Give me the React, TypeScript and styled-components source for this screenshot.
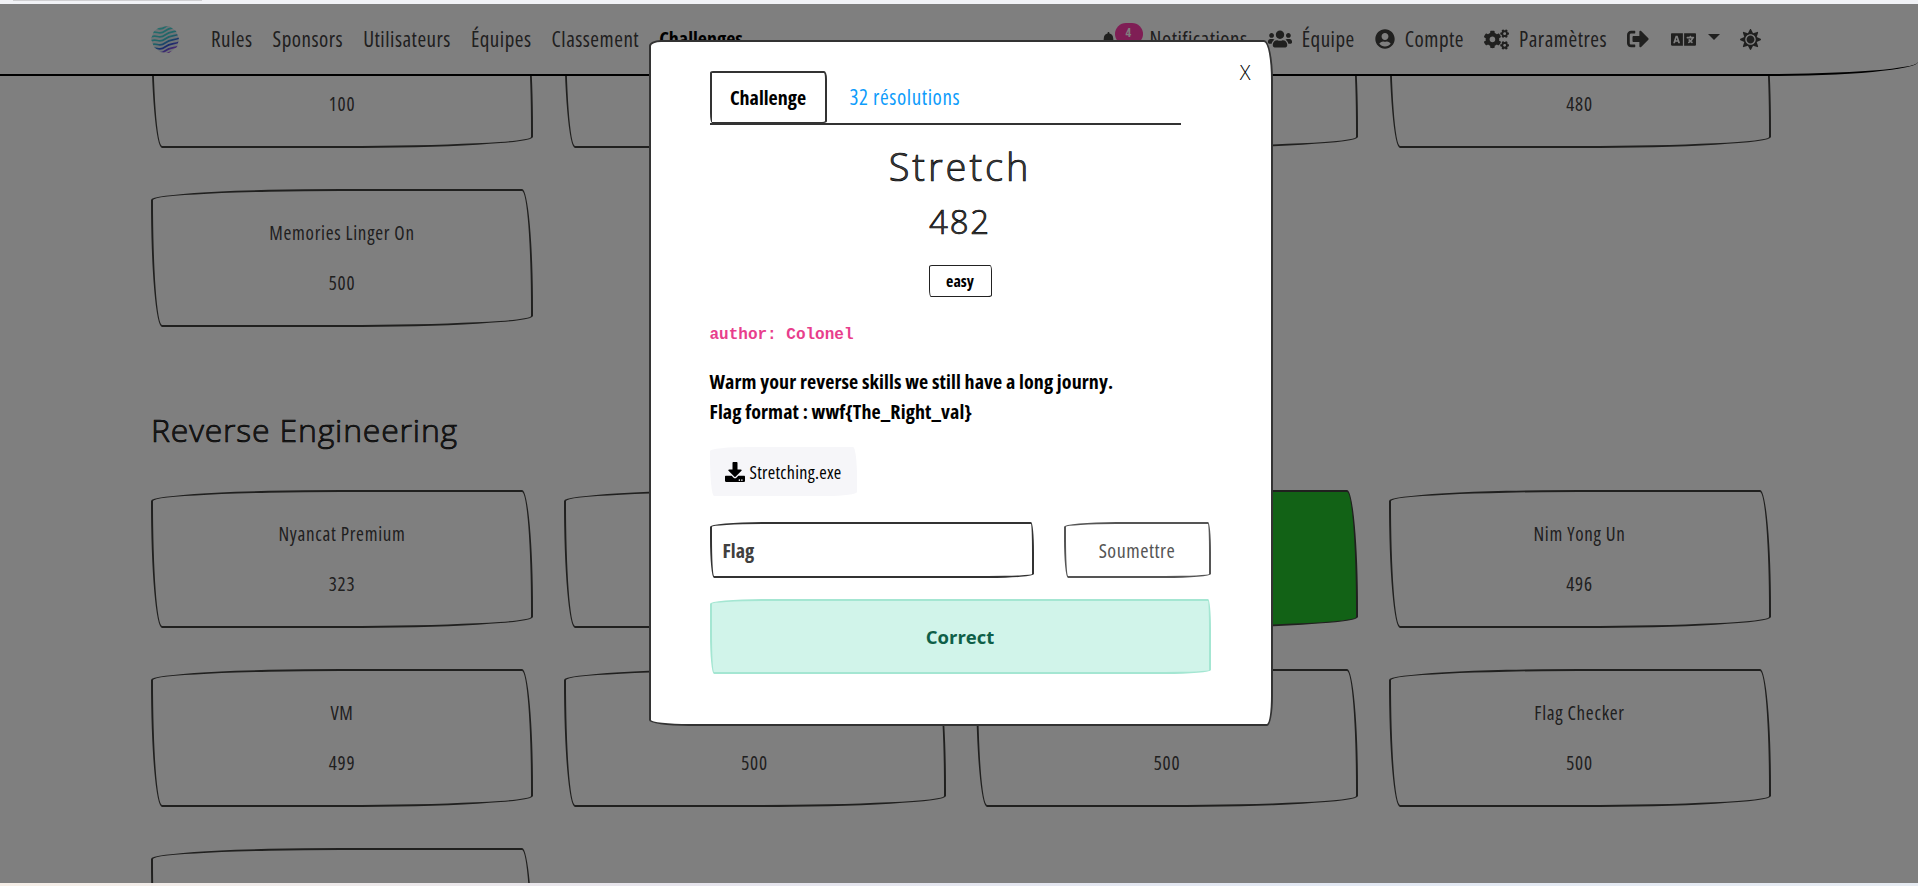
import * as React from 'react';
import styled, { createGlobalStyle, css } from 'styled-components';
import { FaBell, FaCogs, FaDownload, FaLanguage, FaSignOutAlt, FaSun, FaUserCircle, FaUsers } from 'react-icons/fa';

const hand = `"Open Sans", "Liberation Sans", sans-serif`;

const GlobalStyles = createGlobalStyle`
  html, body {
    margin: 0;
    height: 100%;
    overflow: hidden;
    background: #fff;
    color: #41403e;
    font-family: ${hand};
    font-stretch: 75%;
  }
  * { box-sizing: border-box; }
`;

const sketchLarge = css`
  border-radius: 190px 11px 190px 11px / 11px 120px 11px 126px;
`;

const sketchSmall = css`
  border-radius: 52px 3px 46px 4px / 5px 30px 4px 40px;
`;

const outlined = css`
  color: #444;
  font-stretch: 100%;
  font-weight: 300;
  -webkit-text-stroke: 0.7px #000;
`;

const Shell = styled.div`
  display: flex;
  flex-direction: column;
  height: 886px;
  overflow: hidden;
`;

const TopStrip = styled.div`
  flex: 0 0 4px;
  background: #f1f2f6;
  padding-left: 13px;
`;

const TopTab = styled.div`
  width: 189px;
  height: 1px;
  background: #cfcfd2;
`;

const BottomStrip = styled.div`
  flex: 0 0 3px;
  background: linear-gradient(90deg, #f6efe8 0%, #e6e4ec 35%, #e2e8f3 70%, #e6ebf2 100%);
`;

const Viewport = styled.div`
  position: relative;
  flex: 1;
  overflow: hidden;
  background: #fff;
`;

const Nav = styled.nav`
  position: absolute;
  top: 0;
  left: 0;
  right: 0;
  z-index: 1;
  display: flex;
  align-items: center;
  justify-content: space-between;
  height: 72px;
  padding: 0 157px 0 151px;
  background: #fff;
  border-bottom: 2px solid #000;
  border-bottom-right-radius: 155px 14px;
`;

const NavGroup = styled.div`
  display: flex;
  align-items: center;
`;

const LogoMark = styled.svg`
  width: 28px;
  height: 27px;
  margin-right: 32px;
`;

const NavLink = styled.a<{ $active?: boolean }>`
  margin-right: 20px;
  font-size: ${p => (p.$active ? 20 : 21)}px;
  letter-spacing: ${p => (p.$active ? 0 : 0.5)}px;
  line-height: 28px;
  white-space: nowrap;
  color: ${p => (p.$active ? '#000' : '#41403e')};
  font-weight: ${p => (p.$active ? 700 : 400)};
`;

const IconLink = styled.a<{ $wide?: boolean }>`
  display: flex;
  align-items: center;
  margin-left: ${p => (p.$wide ? 22 : 20)}px;
  font-size: 21px;
  letter-spacing: 0.5px;
  line-height: 28px;
  color: #41403e;
  white-space: nowrap;
  svg { flex: none; }
`;

const IconGap = styled.span`
  margin-left: 10px;
`;

const BellWrap = styled.span`
  display: flex;
  align-items: center;
`;

const Badge = styled.span`
  display: inline-block;
  width: 28px;
  height: 22px;
  margin: -10px 7px 0 -1px;
  border-radius: 11px;
  background: #ff3caa;
  color: #fff;
  font-size: 12px;
  font-weight: 700;
  line-height: 20px;
  text-align: center;
`;

const Caret = styled.span`
  width: 0;
  height: 0;
  margin-left: 12px;
  margin-bottom: 4px;
  border-left: 6px solid transparent;
  border-right: 6px solid transparent;
  border-top: 6px solid #41403e;
`;

const Content = styled.main`
  padding: 6px 0 0 151px;
`;

const CardGrid = styled.div`
  display: grid;
  grid-template-columns: repeat(4, 382px);
  column-gap: 30.5px;
  row-gap: 41px;
`;

const SectionTitle = styled.h2`
  margin: 0;
  padding: 83px 0 41px;
  font-size: 32px;
  line-height: 39px;
  letter-spacing: 0.8px;
  ${outlined}
`;

const Card = styled.div<{ $solved?: boolean }>`
  display: flex;
  flex-direction: column;
  align-items: center;
  justify-content: center;
  gap: 26px;
  height: 138px;
  padding-bottom: 1px;
  border: 2px solid #41403e;
  ${sketchLarge}
  background: ${p => (p.$solved ? '#25c52c' : 'transparent')};
  color: #41403e;
  font-size: 19px;
  letter-spacing: 0.7px;
  line-height: 24px;
`;

const Backdrop = styled.div`
  position: absolute;
  inset: 0;
  z-index: 2;
  display: flex;
  align-items: flex-start;
  justify-content: center;
  padding: 36px 0 0 3px;
  background: rgba(0, 0, 0, 0.5);
`;

const Modal = styled.div`
  position: relative;
  width: 624px;
  height: 686px;
  padding: 29px 60px 0 59px;
  background: #fff;
  color: #000;
  border: 2px solid #333;
  border-radius: 12px 9px 6px 40px / 6px 40px 30px 6px;
`;

const CloseButton = styled.span`
  position: absolute;
  top: 19px;
  right: 20px;
  font-size: 20px;
  font-stretch: 100%;
  font-weight: 300;
  line-height: 24px;
  color: #000;
`;

const Tabs = styled.div`
  display: flex;
  align-items: stretch;
  height: 54px;
  margin-right: 30px;
  border-bottom: 2px solid #333;
`;

const ActiveTab = styled.div`
  display: flex;
  align-items: center;
  justify-content: center;
  width: 117px;
  height: 52px;
  border: 2px solid #333;
  border-bottom-width: 1px;
  border-radius: 3px 3px 5px 2px / 2px 8px 2px 10px;
  font-size: 20px;
  font-weight: 700;
  color: #000;
`;

const TabLink = styled.div`
  display: flex;
  align-items: center;
  padding-left: 23px;
  font-size: 21px;
  letter-spacing: 0.6px;
  color: #0d9cfb;
`;

const ChallengeName = styled.h3`
  margin: 19px 0 0;
  font-size: 38px;
  line-height: 44px;
  letter-spacing: 2.9px;
  text-align: center;
  ${outlined}
`;

const ChallengeValue = styled.h4`
  margin: 16px 0 0;
  font-size: 33px;
  line-height: 36px;
  letter-spacing: 1.8px;
  text-align: center;
  ${outlined}
`;

const TagRow = styled.div`
  display: flex;
  justify-content: center;
  margin-top: 25px;
`;

const Tag = styled.span`
  display: flex;
  align-items: center;
  justify-content: center;
  width: 63px;
  height: 32px;
  border: 1.5px solid #222;
  border-radius: 3px 2px 4px 2px / 2px 6px 2px 8px;
  font-size: 16px;
  font-weight: 700;
  color: #000;
`;

const Author = styled.code`
  display: block;
  margin-top: 27px;
  font-family: "Liberation Mono", monospace;
  font-size: 16px;
  font-weight: 700;
  line-height: 22px;
  color: #e83e8c;
`;

const Description = styled.p`
  margin: 21px 0 0;
  font-size: 20px;
  font-weight: 700;
  line-height: 30px;
  letter-spacing: 0.1px;
  color: #000;
`;

const FileButton = styled.a`
  display: inline-flex;
  align-items: center;
  gap: 5px;
  width: 147px;
  height: 49px;
  margin-top: 20px;
  padding-left: 15px;
  background: #f6f6f9;
  border-radius: 40px 4px 30px 4px / 4px 30px 4px 40px;
  font-size: 18px;
  letter-spacing: 0.3px;
  color: #000;
`;

const SubmitRow = styled.div`
  display: flex;
  justify-content: space-between;
  margin-top: 26px;
`;

const FlagInput = styled.div`
  display: flex;
  align-items: center;
  width: 324px;
  height: 56px;
  padding-left: 11px;
  border: 2px solid #333;
  ${sketchSmall}
  font-size: 20px;
  font-weight: 700;
  color: #41403e;
`;

const SubmitButton = styled.button`
  width: 147px;
  height: 56px;
  padding: 0;
  background: #fff;
  border: 2px solid #555;
  ${sketchSmall}
  font-family: ${hand};
  font-stretch: 75%;
  font-size: 20px;
  letter-spacing: 0.5px;
  color: #555;
`;

const Result = styled.div`
  display: flex;
  align-items: center;
  justify-content: center;
  width: 501px;
  height: 75px;
  margin-top: 21px;
  background: #d1f4ea;
  border: 2px solid #a4e6d2;
  ${sketchSmall}
  font-stretch: 100%;
  font-size: 18.5px;
  font-weight: 700;
  color: #0e5f48;
`;

const Logo: React.FC = () => (
  <LogoMark viewBox="0 0 28 27">
    <defs>
      <linearGradient id="logo-fade" gradientUnits="userSpaceOnUse" x1="6" y1="0" x2="20" y2="27">
        <stop offset="0" stopColor="#4fe0d8" />
        <stop offset="0.5" stopColor="#3fc8d0" />
        <stop offset="0.72" stopColor="#2f58d8" />
        <stop offset="1" stopColor="#c050e8" />
      </linearGradient>
      <clipPath id="logo-shape">
        <path d="M9 1 L18 0 L25 5 L28 13 L26 21 L18 27 L9 26 L3 21 L0 13 L3 5 Z" />
      </clipPath>
    </defs>
    <g clipPath="url(#logo-shape)" fill="none" stroke="url(#logo-fade)" strokeWidth="1.7">
      <rect width="28" height="27" fill="#dfe8ee" stroke="none" />
      {[-6, -2, 2, 6, 10, 14, 18, 22, 26].map(y => (
        <path key={y} d={`M-2 ${y + 6} C 5 ${y + 1}, 8 ${y + 8}, 14 ${y + 3} S 24 ${y + 1}, 30 ${y - 3}`} />
      ))}
    </g>
  </LogoMark>
);

type Challenge = { name?: string; value?: number; solved?: boolean };

// entries under the modal or below the fold stay blank, the picture never shows them
const misc: Challenge[] = [
  { value: 100 },
  {},
  {},
  { value: 480 },
  { name: 'Memories Linger On', value: 500 },
];

const reverse: Challenge[] = [
  { name: 'Nyancat Premium', value: 323 },
  {},
  { solved: true },
  { name: 'Nim Yong Un', value: 496 },
  { name: 'VM', value: 499 },
  { value: 500 },
  { value: 500 },
  { name: 'Flag Checker', value: 500 },
  {},
];

const ChallengeCard: React.FC<Challenge> = ({ name, value, solved }) => (
  <Card $solved={solved}>
    {value !== undefined && <span>{name || '\u00a0'}</span>}
    {value !== undefined && <span>{value}</span>}
  </Card>
);

const App: React.FC = () => (
  <>
    <GlobalStyles />
    <Shell>
      <TopStrip>
        <TopTab />
      </TopStrip>
      <Viewport>
        <Nav>
          <NavGroup>
            <Logo />
            <NavLink>Rules</NavLink>
            <NavLink>Sponsors</NavLink>
            <NavLink>Utilisateurs</NavLink>
            <NavLink>Équipes</NavLink>
            <NavLink>Classement</NavLink>
            <NavLink $active>Challenges</NavLink>
          </NavGroup>
          <NavGroup>
            <IconLink>
              <BellWrap>
                <FaBell size={15} />
                <Badge>4</Badge>
              </BellWrap>
              Notifications
            </IconLink>
            <IconLink>
              <FaUsers size={24} />
              <IconGap>Équipe</IconGap>
            </IconLink>
            <IconLink>
              <FaUserCircle size={20} />
              <IconGap>Compte</IconGap>
            </IconLink>
            <IconLink>
              <FaCogs size={25} />
              <IconGap>Paramètres</IconGap>
            </IconLink>
            <IconLink>
              <FaSignOutAlt size={22} />
            </IconLink>
            <IconLink $wide>
              <FaLanguage size={25} />
              <Caret />
            </IconLink>
            <IconLink>
              <FaSun size={21} />
            </IconLink>
          </NavGroup>
        </Nav>
        <Content>
          <CardGrid>
            {misc.map((c, i) => (
              <ChallengeCard key={i} {...c} />
            ))}
          </CardGrid>
          <SectionTitle>Reverse Engineering</SectionTitle>
          <CardGrid>
            {reverse.map((c, i) => (
              <ChallengeCard key={i} {...c} />
            ))}
          </CardGrid>
        </Content>
        <Backdrop>
          <Modal>
            <CloseButton>X</CloseButton>
            <Tabs>
              <ActiveTab>Challenge</ActiveTab>
              <TabLink>32 résolutions</TabLink>
            </Tabs>
            <ChallengeName>Stretch</ChallengeName>
            <ChallengeValue>482</ChallengeValue>
            <TagRow>
              <Tag>easy</Tag>
            </TagRow>
            <Author>author: Colonel</Author>
            <Description>
              Warm your reverse skills we still have a long journy.
              <br />
              Flag format : wwf{'{'}The_Right_val{'}'}
            </Description>
            <FileButton>
              <FaDownload size={20} />
              Stretching.exe
            </FileButton>
            <SubmitRow>
              <FlagInput>Flag</FlagInput>
              <SubmitButton>Soumettre</SubmitButton>
            </SubmitRow>
            <Result>Correct</Result>
          </Modal>
        </Backdrop>
      </Viewport>
      <BottomStrip />
    </Shell>
  </>
);

export default App;
